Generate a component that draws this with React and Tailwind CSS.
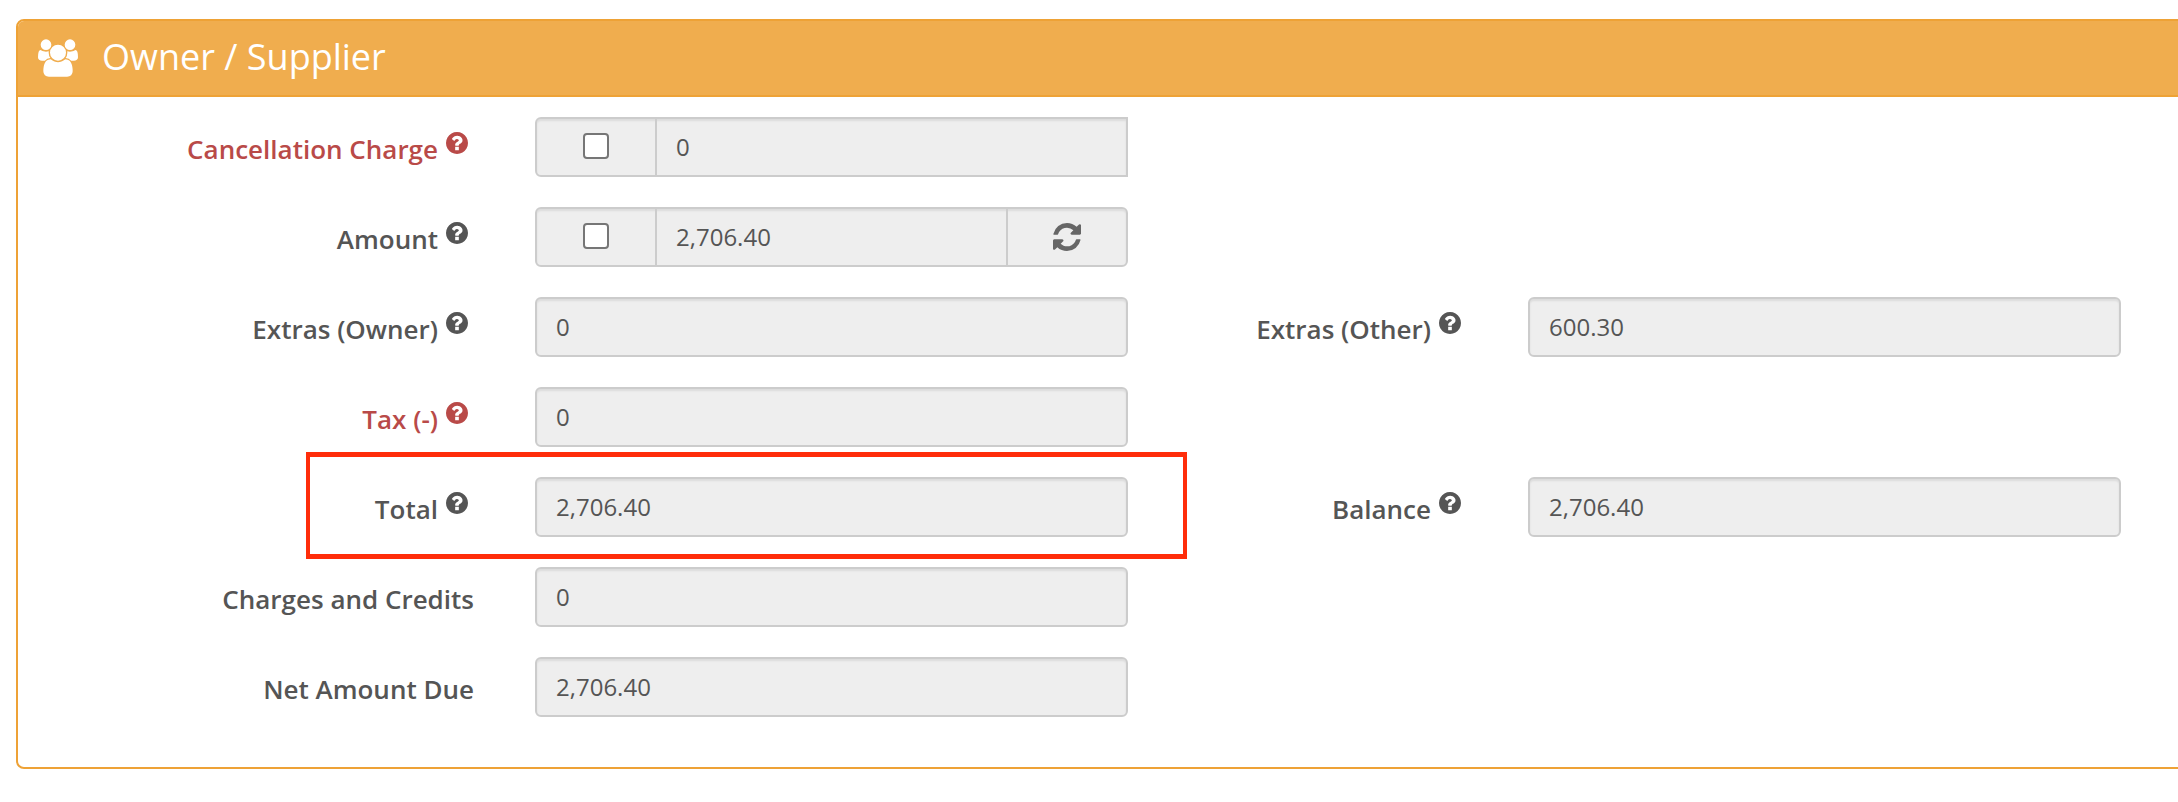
import React from "react";

const font = { fontFamily: '"Open Sans", sans-serif' };

function HelpIcon() {
  return (
    <svg viewBox="128 128 1536 1536" fill="currentColor" className="ml-[8px] mr-[6px] mb-[8px] w-[22px] h-[22px] shrink-0">
      <path d="M1024 1376v-192q0-14-9-23t-23-9h-192q-14 0-23 9t-9 23v192q0 14 9 23t23 9h192q14 0 23-9t9-23zm256-672q0-88-55.500-163t-138.500-116-170-41q-243 0-371 213-15 24 8 42l132 100q7 6 19 6 16 0 25-12 53-68 86-92 34-24 86-24 48 0 85.500 26t37.500 59q0 38-20 61t-68 45q-63 28-115.500 86.500t-52.500 125.500v36q0 14 9 23t23 9h192q14 0 23-9t9-23q0-19 21.500-49.500t54.500-49.500q32-18 49-28.500t46-35 44.500-48 28-60.500 12.500-81zm384 192q0 209-103 385.500t-279.500 279.500-385.500 103-385.500-103-279.500-279.500-103-385.500 103-385.500 279.500-279.500 385.500-103 385.500 103 279.500 279.500 103 385.500z" />
    </svg>
  );
}

function UsersIcon() {
  return (
    <svg viewBox="0 0 1920 1792" fill="currentColor" className="ml-[20px] w-[40px] h-[38px] shrink-0">
      <path d="M593 896q-162 5-265 128h-134q-82 0-138-40.500t-56-118.500q0-353 124-353 6 0 43.500 21t97.500 42.500 119 21.500q67 0 133-23-5 37-5 66 0 139 81 256zm1071 637q0 120-73 189.500t-194 69.500h-874q-121 0-194-69.500t-73-189.500q0-53 3.500-103.500t14-109 26.500-108.500 43-97.500 62-81 85.500-53.500 111.500-20q10 0 43 21.500t73 48 107 48 135 21.500 135-21.500 107-48 73-48 43-21.500q61 0 111.500 20t85.500 53.500 62 81 43 97.500 26.500 108.500 14 109 3.500 103.500zm-1024-1277q0 106-75 181t-181 75-181-75-75-181 75-181 181-75 181 75 75 181zm704 384q0 159-112.500 271.500t-271.500 112.500-271.500-112.500-112.500-271.500 112.500-271.500 271.500-112.500 271.500 112.500 112.500 271.500zm576 225q0 78-56 118.500t-138 40.500h-134q-103-123-265-128 81-117 81-256 0-29-5-66 66 23 133 23 59 0 119-21.500t97.500-42.500 43.500-21q124 0 124 353zm-128-609q0 106-75 181t-181 75-181-75-75-181 75-181 181-75 181 75 75 181z" />
    </svg>
  );
}

function RefreshIcon() {
  return (
    <svg viewBox="128 128 1536 1536" fill="currentColor" className="w-[28px] h-[28px] text-[#666666]">
      <path d="M1639 1056q0 5-1 7-64 268-268 434.500t-478 166.500q-146 0-282.500-55t-243.500-157l-129 129q-19 19-45 19t-45-19-19-45v-448q0-26 19-45t45-19h448q26 0 45 19t19 45-19 45l-137 137q71 66 161 102t187 36q134 0 250-65t186-179q11-17 53-117 8-23 30-23h192q13 0 22.500 9.500t9.500 22.500zm25-800v448q0 26-19 45t-45 19h-448q-26 0-45-19t-19-45 19-45l138-138q-148-137-349-137-134 0-250 65t-186 179q-11 17-53 117-8 23-30 23h-199q-13 0-22.500-9.500t-9.500-22.500v-7q65-268 270-434.500t480-166.500q146 0 284 55.500t245 156.500l130-129q19-19 45-19t45 19 19 45z" />
    </svg>
  );
}

function Label({ text, red, help = true, wide }) {
  return (
    <div className={`${wide ? "w-[517px]" : "w-[400px]"} shrink-0 pr-[61px] flex justify-end items-center h-[60px] text-[26px] font-semibold ${red ? "text-[#b94a48]" : "text-[#555555]"}`}>
      <span className="relative top-[2px]">{text}</span>
      {help && <HelpIcon />}
    </div>
  );
}

function Box({ children, flatRight }) {
  return (
    <div className={`w-[593px] h-[60px] shrink-0 flex items-stretch border-2 border-[#cccccc] bg-[#eeeeee] text-[24px] text-[#555555] shadow-[inset_0_2px_2px_rgba(0,0,0,0.08)] ${flatRight ? "rounded-l-[6px]" : "rounded-[6px]"}`}>
      {children}
    </div>
  );
}

function Value({ v }) {
  return <div className="flex-1 flex items-center pl-[19px]">{v}</div>;
}

function Check() {
  return (
    <div className="w-[120px] shrink-0 flex items-center justify-center border-r-2 border-[#cccccc]">
      <div className="w-[26px] h-[26px] rounded-[4px] border-2 border-[#767676] bg-white mb-[3px]" />
    </div>
  );
}

function Row({ label, red, help, value, check, refresh, right, flatRight }) {
  return (
    <div className="flex items-center">
      <Label wide text={label} red={red} help={help} />
      <Box flatRight={flatRight}>
        {check && <Check />}
        <Value v={value} />
        {refresh && (
          <div className="w-[120px] shrink-0 flex items-center justify-center border-l-2 border-[#cccccc]">
            <RefreshIcon />
          </div>
        )}
      </Box>
      {right && (
        <>
          <Label text={right.label} />
          <Box><Value v={right.value} /></Box>
        </>
      )}
    </div>
  );
}

export default function App() {
  return (
    <div style={font} className="w-[2178px] h-[802px] bg-white pt-[19px] pl-[16px] overflow-hidden">
      <div className="w-[2178px] h-[750px] rounded-[8px] border-2 border-[#eea236] overflow-hidden">
        <div className="h-[76px] bg-[#f0ad4e] border-b-2 border-[#eea236] flex items-center text-white">
          <UsersIcon />
          <span className="ml-[24px] text-[36px] relative top-[-1px]">Owner / Supplier</span>
        </div>
        <div className="pt-[20px] flex flex-col gap-[30px]">
          <Row label="Cancellation Charge" red value="0" check flatRight />
          <Row label="Amount" value="2,706.40" check refresh />
          <Row label="Extras (Owner)" value="0" right={{ label: "Extras (Other)", value: "600.30" }} />
          <Row label="Tax (-)" red value="0" />
          <div className="relative">
            <Row label="Total" value="2,706.40" right={{ label: "Balance", value: "2,706.40" }} />
            <div className="absolute left-[288px] top-[-25px] w-[881px] h-[107px] border-x-[4px] border-y-[5px] border-[#ff2d0a]" />
          </div>
          <Row label="Charges and Credits" help={false} value="0" />
          <Row label="Net Amount Due" help={false} value="2,706.40" />
        </div>
      </div>
    </div>
  );
}
